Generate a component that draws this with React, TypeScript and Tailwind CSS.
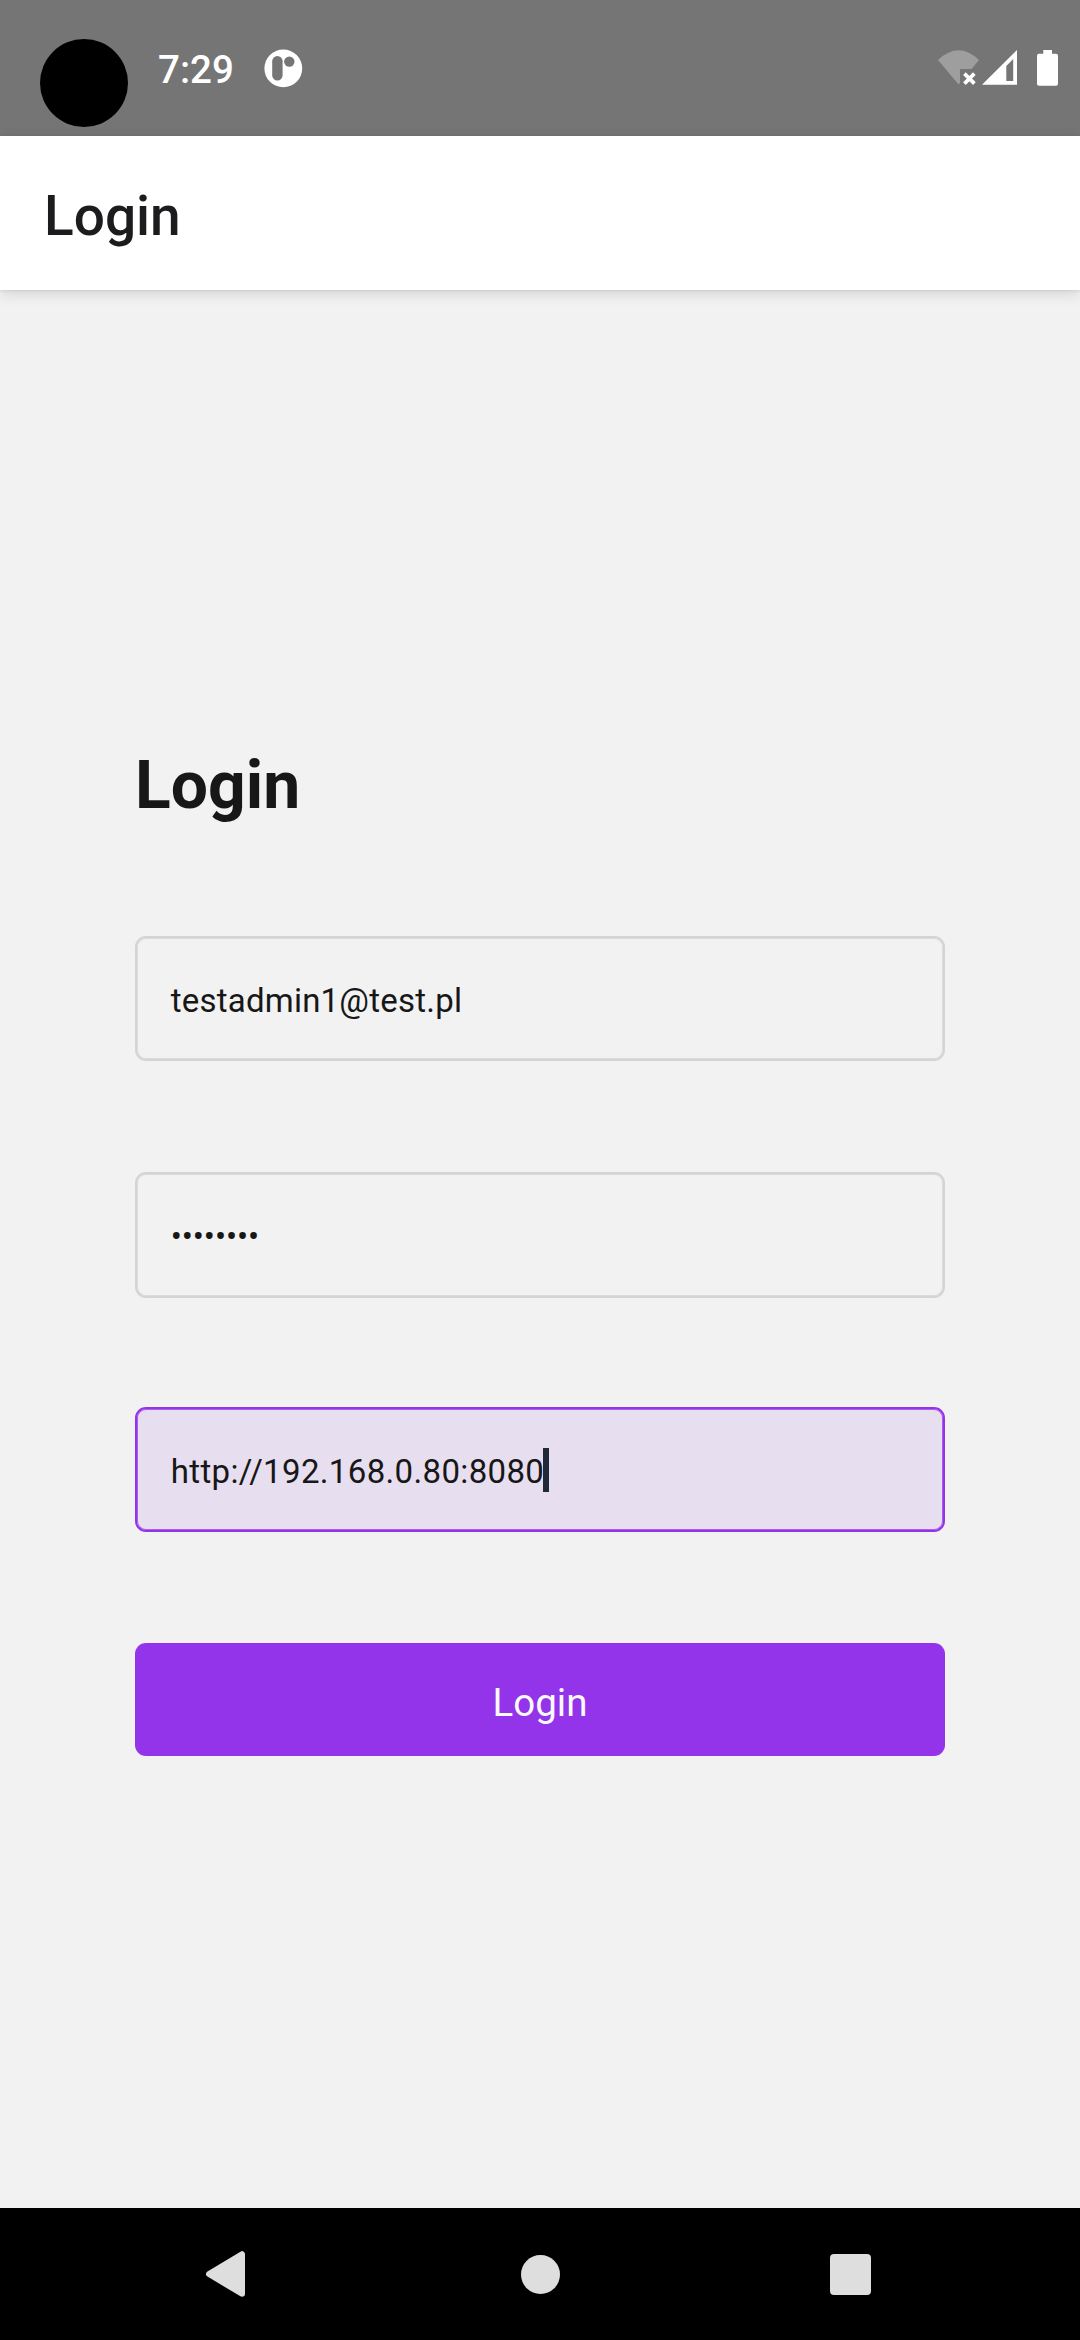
import React from "react";

function StatusBar() {
  return (
    <div className="flex h-[136px] shrink-0 bg-[#757575]">
      <div className="mt-[39px] ml-10 size-[88px] rounded-full bg-black" />
      <div className="mt-[47px] ml-[30px] h-[46px] w-[76px] text-[38.5px] leading-[46px] font-medium text-white">7:29</div>
      <svg className="mt-[49px] ml-[30px]" width="39" height="39" viewBox="0 0 39 39">
        <circle cx="19.3" cy="19.4" r="18.9" fill="#fff" />
        <rect x="8.2" y="7" width="10.4" height="24.4" rx="5.2" fill="#757575" />
        <circle cx="25.3" cy="12.6" r="5.2" fill="#757575" />
      </svg>
      <div className="grow" />
      <svg className="mt-[49px] mr-[17px]" width="128" height="40" viewBox="935 49 128 40">
        <path d="M938 60 Q958.7 40.6 979 60 L971.6 69 H960 V83 L958.6 84.6Z" fill="#9e9e9e" />
        <path d="M965.8 75 L973 82.2 M973 75 L965.8 82.2" stroke="#fff" strokeWidth="3.8" strokeLinecap="square" />
        <path fillRule="evenodd" d="M982 84.7 L1017 50 V84.7Z M1006.3 66 V81 H1013.2 V59Z" fill="#fff" />
        <path d="M1043.3 50 H1052 V53.7 H1056 Q1058 53.7 1058 55.7 V83.7 Q1058 85.7 1056 85.7 H1039 Q1037 85.7 1037 83.7 V55.7 Q1037 53.7 1039 53.7 H1043.3Z" fill="#fff" />
      </svg>
    </div>
  );
}

type FieldProps = { children: React.ReactNode; className?: string };

function Field({ children, className = "" }: FieldProps) {
  return (
    <div className={`flex items-center rounded-[11px] border-2 pl-[33.75px] text-[33px] leading-[44px] text-[#171717] ${className}`}>
      {children}
    </div>
  );
}

function NavBar() {
  return (
    <div className="flex h-[132px] shrink-0 items-center bg-black">
      <svg className="ml-[205px]" width="42" height="48" viewBox="0 0 42 48">
        <path d="M4 24 L37 4.2 V43.8Z" fill="#dedede" stroke="#dedede" strokeWidth="6" strokeLinejoin="round" />
      </svg>
      <div className="ml-[274px] size-[39px] rounded-full bg-[#dedede]" />
      <div className="ml-[270px] size-[41px] rounded-[4px] bg-[#dedede]" />
    </div>
  );
}

export default function App() {
  return (
    <div className="flex h-[2340px] w-[1080px] flex-col overflow-hidden bg-[#f2f2f2] font-[Roboto,sans-serif]">
      <StatusBar />
      <header className="flex h-[154px] shrink-0 items-center bg-white pt-1.5 pl-11 shadow-[0_4px_14px_rgba(0,0,0,0.12),0_1px_3px_rgba(0,0,0,0.08)]">
        <h1 className="text-[55px] leading-[64px] font-medium text-[#1c1c1e]">Login</h1>
      </header>
      <main className="flex grow flex-col px-[135px] pt-[452px]">
        <h2 className="h-[88px] text-[66px] leading-[88px] font-bold text-[#171717]">Login</h2>
        <Field className="mt-[106px] h-[125px] border-[#d4d4d4] pt-1 tracking-[0.22px] shadow-[inset_0_0_0_1px_#dbdbdb]">testadmin1@test.pl</Field>
        <Field className="mt-[111px] h-[126px] border-[#d4d4d4] pt-1 tracking-[-0.1px] shadow-[inset_0_0_0_1px_#dbdbdb]">••••••••</Field>
        <Field className="mt-[109px] h-[125px] border-[#9333ea] bg-[#e7def0] tracking-[0.35px] shadow-[inset_0_0_0_1px_#a85eeb]">
          <span className="pt-1">http://192.168.0.80:8080</span>
          <span className="-ml-px h-11 w-1.5 bg-[#1f2937]" />
        </Field>
        <button className="mt-[111px] flex h-[113px] items-center justify-center rounded-[11px] bg-[#9333ea] pt-1.5 text-[38.5px] leading-[55px] text-[#fafafa]">
          Login
        </button>
      </main>
      <NavBar />
    </div>
  );
}
